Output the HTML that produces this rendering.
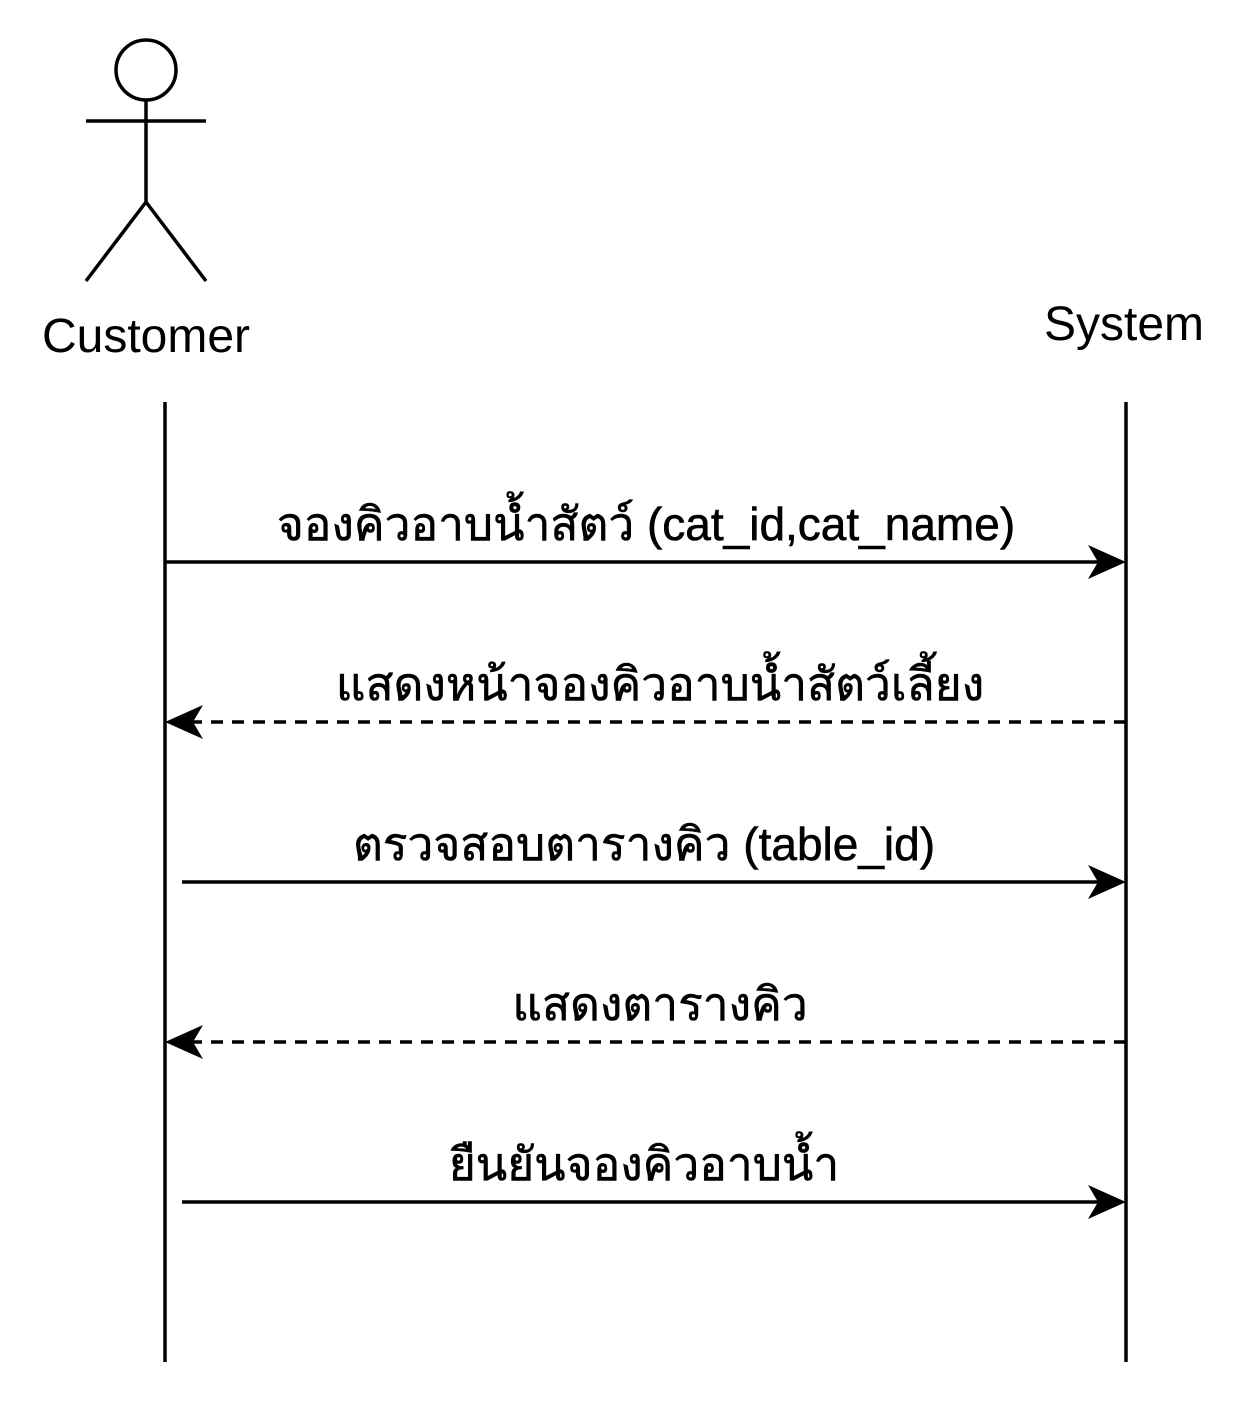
<!DOCTYPE html>
<html><head><meta charset="utf-8"><style>
html,body{margin:0;padding:0;background:#fff;width:1248px;height:1408px;overflow:hidden}
text{font-family:"Liberation Sans","DejaVu Sans",sans-serif;fill:#000}
</style></head><body>
<svg width="1248" height="1408" viewBox="0 0 1248 1408" xmlns="http://www.w3.org/2000/svg">
<g stroke="#000" stroke-width="3.5" fill="none">
<circle cx="146" cy="70" r="30"/>
<line x1="146" y1="100" x2="146" y2="202"/>
<line x1="86" y1="121" x2="206" y2="121"/>
<line x1="146" y1="202" x2="86" y2="281"/>
<line x1="146" y1="202" x2="206" y2="281"/>
<line x1="165" y1="402" x2="165" y2="1362"/>
<line x1="1126" y1="402" x2="1126" y2="1362"/>
<line x1="165" y1="562" x2="1100" y2="562"/>
<line x1="1126" y1="722" x2="192" y2="722" stroke-dasharray="12 9"/>
<line x1="182" y1="882" x2="1100" y2="882"/>
<line x1="1126" y1="1042" x2="192" y2="1042" stroke-dasharray="12 9"/>
<line x1="182" y1="1202" x2="1100" y2="1202"/>
</g>
<g fill="#000">
<path d="M1126 562 L1088 545 L1098 562 L1088 579 Z"/>
<path d="M165 722 L203 705 L193 722 L203 739 Z"/>
<path d="M1126 882 L1088 865 L1098 882 L1088 899 Z"/>
<path d="M165 1042 L203 1025 L193 1042 L203 1059 Z"/>
<path d="M1126 1202 L1088 1185 L1098 1202 L1088 1219 Z"/>
</g>
<g font-size="48" text-anchor="middle">
<text x="146" y="352">Customer</text>
<text x="1124" y="340">System</text>
</g>
<g font-size="46" text-anchor="middle" stroke="#000" stroke-width="0.6">
<text x="646" y="540">จองคิวอาบน้ำสัตว์ (cat_id,cat_name)</text>
<text x="660" y="700">แสดงหน้าจองคิวอาบน้ำสัตว์เลี้ยง</text>
<text x="644" y="860">ตรวจสอบตารางคิว (table_id)</text>
<text x="660" y="1020">แสดงตารางคิว</text>
<text x="644" y="1180">ยืนยันจองคิวอาบน้ำ</text>
</g>
</svg>
</body></html>
